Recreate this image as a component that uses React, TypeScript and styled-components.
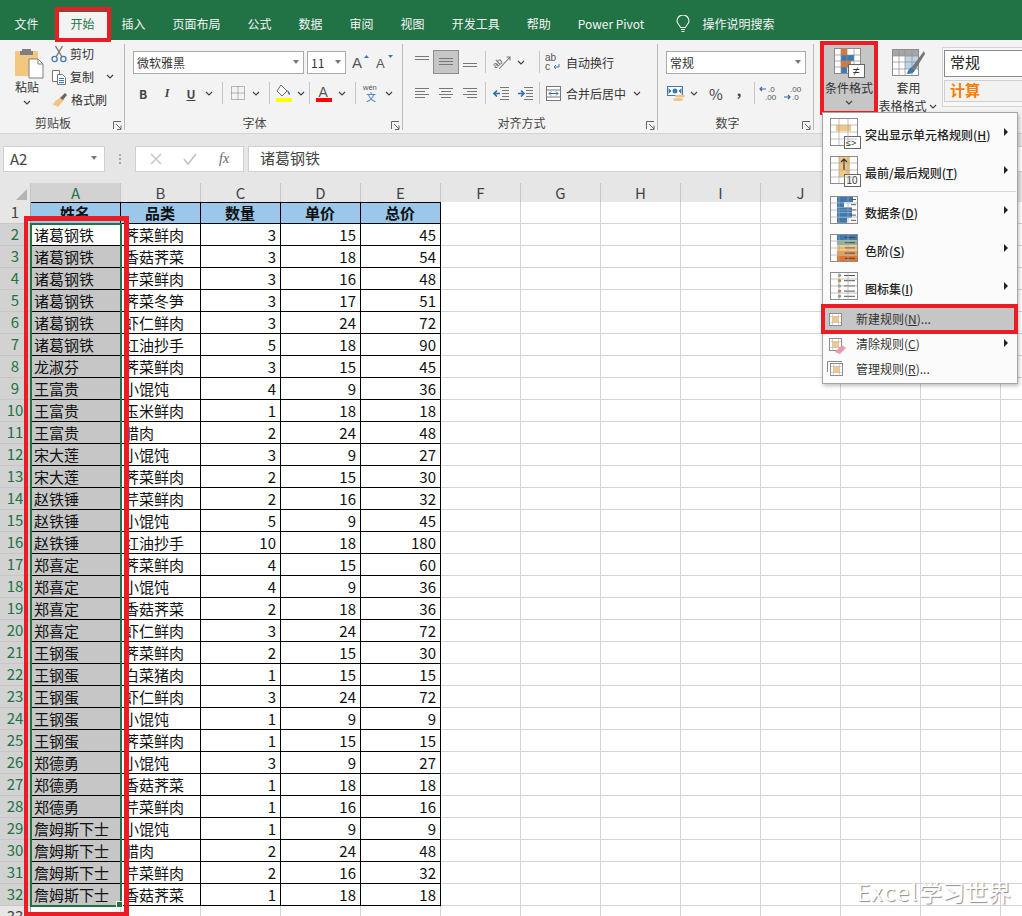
import React from 'react';
import styled, {createGlobalStyle} from 'styled-components';

const GlobalStyle = createGlobalStyle`
  html, body {
    margin: 0;
    height: 100%;
    overflow: hidden;
    background: #fff;
  }
  body {
    font-family: "Noto Sans CJK SC", "Liberation Sans", sans-serif;
    font-size: 12px;
    color: #333;
  }
`

const green = '#217346'
const red = '#ed1c24'

const Page = styled.div`
  position: relative;
  width: 1022px;
  height: 916px;
  overflow: hidden;
  display: flex;
  flex-direction: column;
`

const RedFrame = styled.div<{$inset: string}>`
  position: absolute;
  inset: ${p => p.$inset};
  border: 4px solid ${red};
  pointer-events: none;
  z-index: 5;
`

const ColumnFrame = styled(RedFrame)`
  width: 105px;
  box-sizing: border-box;
  border-width: 5px 5px 4px 4px;
`

/* ---------- title tabs ---------- */
const TabStrip = styled.div`
  height: 40px;
  flex: none;
  background: ${green};
  display: flex;
  align-items: flex-end;
  padding-left: 1px;
`

const Tab = styled.div<{$active?: boolean}>`
  position: relative;
  height: 28px;
  padding: 0 13.5px;
  line-height: 24px;
  color: ${p => p.$active ? green : '#f4f4f4'};
  background: ${p => p.$active ? '#f3f3f3' : 'transparent'};
  margin-left: ${p => p.$active ? '5px' : '0'};
  white-space: nowrap;
`

const SearchTab = styled(Tab)`
  display: flex;
  gap: 12px;
  margin-left: 5px;
  svg { margin-top: 3px; }
`

/* ---------- ribbon ---------- */
const Ribbon = styled.div`
  height: 94px;
  flex: none;
  display: flex;
  background: #f3f3f3;
  border-bottom: 1px solid #d4d4d4;
  box-sizing: border-box;
`

const Group = styled.div<{$w: number; $pad?: number}>`
  width: ${p => p.$w}px;
  flex: none;
  box-sizing: border-box;
  margin-top: 4px;
  height: 86px;
  border-right: 1px solid #b9b9b9;
  padding: 7px 0 0 ${p => p.$pad ?? 0}px;
  display: flex;
  flex-direction: column;
`

const GroupBody = styled.div`
  height: 63px;
  display: flex;
  flex: none;
`

const Stack = styled.div`
  display: flex;
  flex-direction: column;
  gap: 9px;
`

const Row = styled.div<{$off?: number}>`
  display: flex;
  align-items: center;
  height: 22px;
  margin-left: ${p => p.$off ?? 0}px;
`

const GroupLabel = styled.div<{$shift: number}>`
  display: flex;
  justify-content: center;
  height: 18px;
  line-height: 18px;
  color: #444;
  transform: translateX(${p => p.$shift}px);
`

const Launcher = styled.svg`
  position: absolute;
  right: 3px;
  bottom: 3px;
`

const GroupWrap = styled.div`
  position: relative;
`

const StylesWrap = styled(GroupWrap)`
  display: flex;
  flex: 1;
  padding: 5px 0 0 10px;
`

const Select = styled.div<{$w: number}>`
  width: ${p => p.$w}px;
  height: 23px;
  box-sizing: border-box;
  background: #fff;
  border: 1px solid #ababab;
  display: flex;
  align-items: center;
  justify-content: space-between;
  padding: 0 4px 0 3px;
  margin-right: 3px;
  color: #333;
`

const Caret = styled.i`
  width: 0;
  height: 0;
  border-left: 3.5px solid transparent;
  border-right: 3.5px solid transparent;
  border-top: 4px solid #777;
  flex: none;
`

const Btn = styled.div<{$w?: number; $on?: boolean; $h?: number}>`
  width: ${p => p.$w ?? 24}px;
  height: ${p => p.$h ?? 22}px;
  flex: none;
  display: flex;
  align-items: center;
  justify-content: center;
  color: #444;
  box-sizing: border-box;
  background: ${p => p.$on ? '#c6c6c6' : 'transparent'};
  outline: ${p => p.$on ? '1px solid #8c8c8c' : 'none'};
`

const Sep = styled.i<{$l?: number; $r?: number}>`
  width: 1px;
  height: 22px;
  background: #c6c6c6;
  margin: 0 ${p => p.$r ?? 3}px 0 ${p => p.$l ?? 7}px;
  flex: none;
`

const ClipColumn = styled.div`
  margin-top: -9px;
`

const ClipItem = styled.div<{$gap?: number}>`
  display: flex;
  align-items: center;
  height: 23px;
  gap: ${p => p.$gap ?? 3}px;
  color: #333;
  white-space: nowrap;
  svg { flex: none; }
`

const PasteBtn = styled.div`
  width: 40px;
  height: 70px;
  margin: -4px 4px 0 7px;
  display: flex;
  flex-direction: column;
  align-items: center;
  color: #333;
  line-height: 16px;
  svg { flex: none; }
  > svg { margin-left: 4px; }
`

const BigBtn = styled.div<{$w: number; $on?: boolean}>`
  position: relative;
  width: ${p => p.$w}px;
  height: 66px;
  background: ${p => p.$on ? '#c6c6c6' : 'transparent'};
  display: flex;
  flex-direction: column;
  align-items: center;
  line-height: 14px;
  white-space: nowrap;
  color: #333;
  flex: none;
  svg { flex: none; }
`

const BigLabel = styled.span<{$top?: number}>`
  display: flex;
  align-items: center;
  margin-top: ${p => p.$top ?? 0}px;
`

const StyleGallery = styled.div`
  margin: 2px 0 0 3px;
  flex: 1;
  height: 60px;
  box-sizing: border-box;
  background: #f7f7f7;
  border: 1px solid #d4d4d4;
  border-right: 0;
  padding: 2px 0 0 1px;
  display: flex;
  flex-direction: column;
  gap: 3px;
  font-size: 15px;
`

const StyleCell = styled.div<{$calc?: boolean}>`
  height: ${p => p.$calc ? 22 : 27}px;
  padding-left: 5px;
  box-sizing: border-box;
  background: ${p => p.$calc ? '#f2f2f2' : '#fff'};
  color: ${p => p.$calc ? '#fa7d00' : '#222'};
  font-weight: ${p => p.$calc ? 700 : 400};
  border: 1px solid ${p => p.$calc ? '#d0d0d0' : '#8a8a8a'};
  border-right: 0;
  line-height: ${p => p.$calc ? 18 : 21}px;
`

/* ---------- formula bar ---------- */
const FormulaBar = styled.div`
  height: 48px;
  flex: none;
  box-sizing: border-box;
  background: #e6e6e6;
  display: flex;
  padding: 12px 0 0 3px;
`

const NameBox = styled.div`
  width: 102px;
  height: 26px;
  box-sizing: border-box;
  background: #fff;
  border: 1px solid #d0d0d0;
  display: flex;
  align-items: center;
  justify-content: space-between;
  padding: 0 7px 2px 6px;
  font-size: 15px;
  color: #444;
`

const Dots = styled.div`
  width: 30px;
  height: 26px;
  display: flex;
  flex-direction: column;
  align-items: center;
  justify-content: center;
  gap: 2px;
  i { width: 2px; height: 2px; background: #a6a6a6; }
`

const FxButtons = styled.div`
  width: 109px;
  height: 26px;
  box-sizing: border-box;
  background: #fff;
  border: 1px solid #d0d0d0;
  display: flex;
  align-items: center;
  justify-content: space-around;
  padding: 0 3px;
  margin-right: 4px;
  color: #777;
`

const FxMark = styled.span`
  font: italic 14px "Liberation Serif", serif;
  color: #666;
`

const FormulaInput = styled.div`
  flex: 1;
  height: 26px;
  box-sizing: border-box;
  background: #fff;
  border: 1px solid #d0d0d0;
  border-right: 0;
  padding-left: 11px;
  font-size: 15px;
  line-height: 22px;
  color: #444;
`

/* ---------- sheet ---------- */
const Sheet = styled.div`
  position: relative;
  flex: 1;
  overflow: hidden;
  padding-top: 1px;
  background-color: #e6e6e6;
`

const GridRow = styled.div<{$head?: boolean}>`
  display: grid;
  grid-template-columns: 31px 90px repeat(12, 80px);
  height: ${p => p.$head ? 19 : 22}px;
  background: #fff;
  font-size: 15px;
  line-height: 20px;
`

const ColHead = styled.div<{$selected?: boolean}>`
  background: ${p => p.$selected ? '#d2d2d2' : '#e6e6e6'};
  color: ${p => p.$selected ? green : '#444'};
  border-right: 1px solid #c6c6c6;
  border-bottom: ${p => p.$selected ? `2px solid ${green}` : '1px solid #a6a6a6'};
  box-sizing: border-box;
  text-align: center;
  line-height: 19px;
`

const Corner = styled(ColHead)`
  display: flex;
  align-items: flex-end;
  justify-content: flex-end;
  padding: 0 3px 3px 0;
  svg { display: block; }
`

const RowHead = styled.div<{$selected?: boolean}>`
  background: ${p => p.$selected ? '#d2d2d2' : '#e6e6e6'};
  color: ${p => p.$selected ? green : '#444'};
  border-right: 1px solid #a6a6a6;
  border-bottom: 1px solid #c6c6c6;
  box-sizing: border-box;
  text-align: center;
`

const Cell = styled.div<{$selected?: boolean; $lined?: boolean; $title?: boolean; $num?: boolean}>`
  box-sizing: border-box;
  border-right: 1px solid ${p => p.$lined ? '#000' : '#d4d4d4'};
  border-bottom: 1px solid ${p => p.$lined ? '#000' : '#d4d4d4'};
  background: ${p => p.$title ? '#9bc8ea' : p.$selected ? '#c6c6c6' : '#fff'};
  box-shadow: ${p => p.$title ? 'inset 0 1px 0 #000' : 'none'};
  font-weight: ${p => p.$title ? 700 : 400};
  text-align: ${p => p.$title ? 'center' : p.$num ? 'right' : 'left'};
  padding: 0 4px 0 ${p => p.$num ? 0 : 3}px;
  color: #111;
  white-space: nowrap;
  overflow: hidden;
  line-height: 21px;
`

const Selection = styled.div`
  position: absolute;
  left: 30px;
  top: 41px;
  width: 92px;
  height: 684px;
  box-sizing: border-box;
  border: 2px solid ${green};
  z-index: 3;
  pointer-events: none;
`

const Handle = styled.i`
  position: absolute;
  right: -3px;
  bottom: -3px;
  width: 5px;
  height: 5px;
  background: ${green};
  border: 1px solid #fff;
`

const Watermark = styled.div`
  position: absolute;
  right: 11px;
  bottom: 12px;
  font-size: 23px;
  line-height: 26px;
  color: #fff;
  text-shadow: 1px 1px 1px #8c8c8c;
  z-index: 4;
`

const WatermarkLatin = styled.span`
  letter-spacing: 1.6px;
`

/* ---------- dropdown ---------- */
const Menu = styled.div`
  position: absolute;
  left: 822px;
  top: 112px;
  width: 196px;
  height: 272px;
  box-sizing: border-box;
  background: #fbfbfb;
  border: 1px solid #a6a6a6;
  box-shadow: 1px 2px 4px rgba(0, 0, 0, .25);
  padding-top: 2px;
  z-index: 6;
`

const BigItem = styled.div`
  height: 38px;
  display: grid;
  grid-template-columns: 42px 1fr 13px;
  align-items: center;
  font-weight: 500;
  color: #222;
  svg { margin-left: 7px; }
`

const SmallItem = styled.div<{$hot?: boolean}>`
  position: relative;
  height: 25px;
  display: grid;
  grid-template-columns: 33px 1fr 13px;
  align-items: center;
  color: #333;
  background: ${p => p.$hot ? '#c6c6c6' : 'transparent'};
  span { padding-bottom: 2px; }
  svg { margin-left: 4px; }
`

const MenuSep = styled.div`
  height: 1px;
  margin: 0 1px 1px 45px;
  background: #d8d8d8;
`

const SubArrow = styled.i`
  width: 0;
  height: 0;
  border-top: 4px solid transparent;
  border-bottom: 4px solid transparent;
  border-left: 4px solid #222;
  margin-bottom: 4px;
`

/* ---------- icons ---------- */
const Chev = ({w = 12, h}: {w?: number; h?: number}) => (
  <Btn $w={w} $h={h}><svg width="8" height="5" viewBox="0 0 8 5"><path d="M1 1l3 3 3-3" fill="none" stroke="#444" strokeWidth="1.2"/></svg></Btn>
)

const LauncherIcon = () => (
  <Launcher width="9" height="9" viewBox="0 0 9 9">
    <path d="M.5 8V.5H8M3 3l5 5M8 4.5V8.500H4" fill="none" stroke="#666"/>
  </Launcher>
)

const Paste = () => (
  <svg width="30" height="32" viewBox="0 0 30 32">
    <rect x="1" y="4" width="23" height="25" rx="1" fill="#f3c77f"/>
    <path d="M8 4V2h9v2h2v4H6V4z" fill="#7f7f7f"/>
    <path d="M15 12h9l5 5v14H15z" fill="#fff" stroke="#7f7f7f"/>
    <path d="M24 12v5h5" fill="none" stroke="#7f7f7f"/>
  </svg>
)

const Scissors = () => (
  <svg width="16" height="18" viewBox="0 0 16 18">
    <circle cx="3.6" cy="14" r="2.6" fill="none" stroke="#3d78b3" strokeWidth="1.3"/>
    <circle cx="12.4" cy="14" r="2.6" fill="none" stroke="#3d78b3" strokeWidth="1.3"/>
    <path d="M4.5 1l6.5 11M11.5 1L5 12" stroke="#777" strokeWidth="1.4"/>
  </svg>
)

const CopyIcon = () => (
  <svg width="16" height="16" viewBox="0 0 16 16">
    <path d="M1.5 1.500h7v11h-7z" fill="#fff" stroke="#777"/>
    <path d="M6.500 5.500h5l3 3v7h-8z" fill="#fff" stroke="#777"/>
    <path d="M8 9.500h5M8 11.500h5M8 13.500h5" stroke="#3d78b3"/>
  </svg>
)

const Painter = () => (
  <svg width="17" height="16" viewBox="0 0 17 16">
    <path d="M10 5l3 3-6 7-6-3 3-1-1-1z" fill="#f0c583"/>
    <path d="M9 6l5-5 2 2-4 5z" fill="#666"/>
  </svg>
)

const GrowFont = ({up}: {up: boolean}) => (
  <svg width="20" height="16" viewBox="0 0 20 16">
    <text x="1" y="14" fontSize={up ? 15 : 13} fontFamily="Liberation Sans" fill="#555">A</text>
    <path d={up ? 'M13 4l2.500-3L18 4z' : 'M13 1h5l-2.500 3z'} fill="#3d78b3"/>
  </svg>
)

const BorderIcon = () => (
  <svg width="14" height="14" viewBox="0 0 14 14">
    <path d="M.5.500h13v13H.5zM7 .5v13M.5 7h13" fill="none" stroke="#777" strokeDasharray="1 1"/>
  </svg>
)

const FillIcon = () => (
  <svg width="18" height="18" viewBox="0 0 18 18">
    <path d="M6 1l6 6-5 5-5-5z" fill="#fff" stroke="#666"/>
    <path d="M12 6c2 1 3 3 3 4s-2 1-2-1z" fill="#3d78b3"/>
    <rect x="1" y="14" width="16" height="4" fill="#ffff00"/>
  </svg>
)

const ColorIcon = () => (
  <svg width="18" height="18" viewBox="0 0 18 18">
    <text x="3.500" y="13" fontSize="14" fontFamily="Liberation Sans" fill="#555">A</text>
    <rect x="1" y="14" width="16" height="4" fill="#ff0000"/>
  </svg>
)

const WenIcon = () => (
  <svg width="18" height="20" viewBox="0 0 18 20">
    <text x="1" y="7" fontSize="7.500" fontFamily="Liberation Sans" fill="#555">wén</text>
    <text x="4" y="18" fontSize="10" fontFamily="Noto Sans CJK SC" fill="#3d78b3">文</text>
  </svg>
)

const Lines = ({rows, y = 1}: {rows: number; y?: number}) => (
  <svg width="16" height="16" viewBox="0 0 16 16">
    {Array.from({length: rows}).map((_, i) =>
      <path key={i} d={`M1 ${y + i * 3 + .5}h14`} stroke="#777"/>)}
  </svg>
)

const AlignText = ({side}: {side: 'l' | 'c' | 'r'}) => {
  const short = side === 'l' ? 'M1 5.500h10M1 11.500h10' : side === 'c' ? 'M3 5.500h10M3 11.500h10' : 'M5 5.500h10M5 11.500h10'
  return (
    <svg width="16" height="14" viewBox="0 0 16 14">
      <path d="M1 2.500h14M1 8.500h14" stroke="#777"/>
      <path d={short} stroke="#777"/>
    </svg>
  )
}

const Orient = () => (
  <svg width="18" height="16" viewBox="0 0 18 16">
    <text x="0" y="12" fontSize="9" fontFamily="Liberation Sans" fill="#555" transform="rotate(-40 5 10)">ab</text>
    <path d="M6 15L17 3M13.500 3H17v3.500" fill="none" stroke="#777" strokeWidth="1.100"/>
  </svg>
)

const Indent = ({dir}: {dir: 'in' | 'out'}) => (
  <svg width="17" height="14" viewBox="0 0 17 14">
    <path d="M7 1.500h9M9 4.500h7M9 7.500h7M9 10.500h7M7 13.500h9" stroke="#777"/>
    <path d={dir === 'out' ? 'M7 7.500H1M4 4.500l-3 3 3 3' : 'M1 7.500h6M4 4.500l3 3-3 3'} fill="none" stroke="#2f6ea8" strokeWidth="1.600"/>
  </svg>
)

const WrapIcon = () => (
  <svg width="16" height="18" viewBox="0 0 16 18">
    <text x="0" y="8" fontSize="10" fontFamily="Liberation Sans" fill="#555">ab</text>
    <text x="0" y="17" fontSize="10" fontFamily="Liberation Sans" fill="#555">c</text>
    <path d="M14 11v3H9M11 12l-2 2 2 2" fill="none" stroke="#3d78b3"/>
  </svg>
)

const MergeIcon = () => (
  <svg width="15" height="15" viewBox="0 0 15 15">
    <rect x=".5" y=".5" width="14" height="14" fill="#fff" stroke="#777"/>
    <path d="M.5 4h14M.5 11h14" fill="none" stroke="#777"/>
    <path d="M3 7.500h9M3 7.500l2-2M3 7.500l2 2M12 7.500l-2-2M12 7.500l-2 2" fill="none" stroke="#2f6ea8"/>
  </svg>
)

const MoneyIcon = () => (
  <svg width="20" height="17" viewBox="0 0 20 17">
    <rect x=".5" y="1.500" width="15" height="9" fill="#fff" stroke="#3d78b3"/>
    <circle cx="8" cy="6" r="2.500" fill="#3d78b3"/>
    <path d="M1.500 3l3 3-3 3zM14.500 3l-3 3 3 3z" fill="#3d78b3"/>
    <ellipse cx="13" cy="11" rx="5" ry="1.500" fill="#f0c583"/>
    <ellipse cx="11" cy="14.500" rx="5" ry="1.500" fill="#f0c583"/>
  </svg>
)

const DecimalIcon = ({more}: {more: boolean}) => (
  <svg width="22" height="18" viewBox="0 0 22 18">
    <text x={more ? 9 : 7} y="8" fontSize="8" fontFamily="Liberation Sans" fill="#555">{more ? '.0' : '.00'}</text>
    <text x={more ? 6 : 9} y="16" fontSize="8" fontFamily="Liberation Sans" fill="#555">{more ? '.00' : '.0'}</text>
    <path d={more ? 'M7 5H1M3 3L1 5l2 2' : 'M1 13h6M5 11l2 2-2 2'} fill="none" stroke="#2f6ea8" strokeWidth="1.200"/>
  </svg>
)

const Bulb = () => (
  <svg width="14" height="18" viewBox="0 0 14 18">
    <path d="M4.500 12.500C4 10 1 9 1 6a6 6 0 0 1 12 0c0 3-3 4-3.500 6.500zM5 14.500h4M5.500 16.500h3" fill="none" stroke="#f4f4f4" strokeWidth="1.100"/>
  </svg>
)

const CondIcon = () => (
  <svg width="31" height="30" viewBox="0 0 31 30" style={{marginTop: 3}}>
    <rect x=".5" y=".5" width="26" height="25" fill="#fff" stroke="#8c8c8c"/>
    <rect x="7" y="1" width="6" height="6" fill="#e2762e"/>
    <rect x="7" y="7" width="13" height="6" fill="#3d78b3"/>
    <rect x="7" y="13" width="10" height="6" fill="#e2762e"/>
    <rect x="7" y="19" width="6" height="6" fill="#3d78b3"/>
    <path d="M7 1v24M13 1v24M20 1v24M1 7h25M1 13h25M1 19h25" stroke="#8c8c8c" strokeWidth=".7"/>
    <rect x="14.500" y="16.500" width="16" height="13" fill="#fff" stroke="#666"/>
    <text x="19" y="27" fontSize="12" fontFamily="Liberation Sans" fill="#333">≠</text>
  </svg>
)

const TableStyleIcon = () => (
  <svg width="34" height="30" viewBox="0 0 34 30" style={{marginTop: 4}}>
    <rect x=".5" y=".5" width="26" height="26" fill="#fff" stroke="#8c8c8c"/>
    <rect x="1" y="1" width="25" height="6" fill="#a6a6a6"/>
    <rect x="13" y="7" width="13" height="13" fill="#bcd3ea"/>
    <path d="M7 1v26M13 1v26M20 1v26M1 7h25M1 13h25M1 20h25" stroke="#8c8c8c" strokeWidth=".7"/>
    <path d="M32 2L20 18l3 3L33 5z" fill="#777"/>
    <path d="M20 18c-3 1-4 3-5 7 4 0 7-1 8-4z" fill="#3d78b3"/>
  </svg>
)

const MenuGrid = ({children}: {children: React.ReactNode}) => (
  <svg width="32" height="32" viewBox="0 0 32 32">
    <rect x=".5" y=".5" width="27" height="27" fill="#fff" stroke="#8c8c8c"/>
    {children}
    <path d="M9 1v26M18 1v26M1 7h26M1 14h26M1 21h26" stroke="#a6a6a6" strokeWidth=".7"/>
  </svg>
)

const Badge = ({text}: {text: string}) => (
  <>
    <rect x="14.500" y="18.500" width="16" height="12" fill="#fff" stroke="#666"/>
    <text x={text === '10' ? 16.5 : 16} y="28" fontSize={text === '10' ? 10 : 9} fontFamily="Liberation Sans" fill="#333">{text}</text>
  </>
)

const HighlightIcon = () => (
  <MenuGrid>
    <rect x="6" y="7" width="15" height="6" fill="#f3c77f"/>
    <Badge text="≤>"/>
  </MenuGrid>
)

const TopIcon = () => (
  <MenuGrid>
    <rect x="9" y="1" width="11" height="20" fill="#f3c77f"/>
    <path d="M14 14V3M11 6l3-3 3 3" fill="none" stroke="#333" strokeWidth="1.200"/>
    <Badge text="10"/>
  </MenuGrid>
)

const BarsIcon = () => (
  <MenuGrid>
    {[16, 7, 15, 15, 10].map((w, i) =>
      <React.Fragment key={i}>
        <rect x="7" y={1 + i * 5.2} width={w} height="5" fill="#3d78b3"/>
        <path d={`M21 ${3.5 + i * 5.2}h5`} stroke="#555"/>
      </React.Fragment>)}
  </MenuGrid>
)

const ScaleIcon = () => (
  <MenuGrid>
    {['#3d78b3', '#8fb39a', '#f3c77f', '#eb9c50', '#e2762e'].map((c, i) =>
      <React.Fragment key={c}>
        <rect x="7" y={1 + i * 5.2} width="20" height="5.2" fill={c}/>
        <path d={`M15 ${3.5 + i * 5.2}h10`} stroke="#444"/>
      </React.Fragment>)}
  </MenuGrid>
)

const IconSetIcon = () => (
  <MenuGrid>
    {['#7fb08c', '#e2762e', '#7fb08c', '#e2762e', '#7fb08c'].map((c, i) =>
      <React.Fragment key={i}>
        <circle cx="9.500" cy={3.5 + i * 5.2} r="1.700" fill={c}/>
        <path d={`M14 ${3.5 + i * 5.2}h11`} stroke="#555"/>
      </React.Fragment>)}
  </MenuGrid>
)

const SmallRule = ({kind}: {kind: 'new' | 'clear' | 'manage'}) => {
  const x = kind === 'manage' ? 3.5 : 2.5
  return (
    <svg width="20" height="20" viewBox="0 0 20 20">
      {kind === 'manage' && <path d="M.5 12V1.500H15" fill="none" stroke="#8c8c8c"/>}
      <rect x={x} y="3.500" width="12" height="12" fill="#fff" stroke="#8c8c8c"/>
      <rect x={x + 3} y="6.500" width="6" height="6" fill="#f3c77f"/>
      <path d={`M${x} 6.500h12M${x} 12.500h12M${x + 3} 3.500v12M${x + 9} 3.500v12`} stroke="#b5b5b5" strokeWidth=".6"/>
      {kind === 'clear' && <path d="M8 17l7-7 4 3-6 6z" fill="#e89ab0"/>}
    </svg>
  )
}

/* ---------- data ---------- */
type Rec = [string, string, number, number, number]

const records: Rec[] = [
  ['诸葛钢铁', '荠菜鲜肉', 3, 15, 45], ['诸葛钢铁', '香菇荠菜', 3, 18, 54],
  ['诸葛钢铁', '芹菜鲜肉', 3, 16, 48], ['诸葛钢铁', '荠菜冬笋', 3, 17, 51],
  ['诸葛钢铁', '虾仁鲜肉', 3, 24, 72], ['诸葛钢铁', '红油抄手', 5, 18, 90],
  ['龙淑芬', '荠菜鲜肉', 3, 15, 45], ['王富贵', '小馄饨', 4, 9, 36],
  ['王富贵', '玉米鲜肉', 1, 18, 18], ['王富贵', '腊肉', 2, 24, 48],
  ['宋大莲', '小馄饨', 3, 9, 27], ['宋大莲', '荠菜鲜肉', 2, 15, 30],
  ['赵铁锤', '芹菜鲜肉', 2, 16, 32], ['赵铁锤', '小馄饨', 5, 9, 45],
  ['赵铁锤', '红油抄手', 10, 18, 180], ['郑喜定', '荠菜鲜肉', 4, 15, 60],
  ['郑喜定', '小馄饨', 4, 9, 36], ['郑喜定', '香菇荠菜', 2, 18, 36],
  ['郑喜定', '虾仁鲜肉', 3, 24, 72], ['王钢蛋', '荠菜鲜肉', 2, 15, 30],
  ['王钢蛋', '白菜猪肉', 1, 15, 15], ['王钢蛋', '虾仁鲜肉', 3, 24, 72],
  ['王钢蛋', '小馄饨', 1, 9, 9], ['王钢蛋', '荠菜鲜肉', 1, 15, 15],
  ['郑德勇', '小馄饨', 3, 9, 27], ['郑德勇', '香菇荠菜', 1, 18, 18],
  ['郑德勇', '芹菜鲜肉', 1, 16, 16], ['詹姆斯下士', '小馄饨', 1, 9, 9],
  ['詹姆斯下士', '腊肉', 2, 24, 48], ['詹姆斯下士', '芹菜鲜肉', 2, 16, 32],
  ['詹姆斯下士', '香菇荠菜', 1, 18, 18],
]

const letters = 'ABCDEFGHIJKLM'.split('')
const blanks = (n: number) => Array.from({length: n}).map((_, i) => <Cell key={i}/>)

function TitleTabs() {
  return (
    <TabStrip>
      <Tab>文件</Tab>
      <Tab $active>开始<RedFrame $inset="-5px -3px -2px -2px"/></Tab>
      {['插入', '页面布局', '公式', '数据', '审阅', '视图', '开发工具', '帮助', 'Power Pivot'].map(t => <Tab key={t}>{t}</Tab>)}
      <SearchTab><Bulb/>操作说明搜索</SearchTab>
    </TabStrip>
  )
}

function HomeRibbon() {
  return (
    <Ribbon>
      <GroupWrap>
        <Group $w={125}>
          <GroupBody>
            <PasteBtn>
              <Paste/>
              <span>粘贴</span>
              <Chev h={14}/>
            </PasteBtn>
            <ClipColumn>
              <ClipItem><Scissors/>剪切</ClipItem>
              <ClipItem><CopyIcon/>复制<span style={{width: 4}}/><Chev/></ClipItem>
              <ClipItem><Painter/>格式刷</ClipItem>
            </ClipColumn>
          </GroupBody>
          <GroupLabel $shift={-9}>剪贴板</GroupLabel>
        </Group>
        <LauncherIcon/>
      </GroupWrap>

      <GroupWrap>
        <Group $w={278} $pad={8}>
          <GroupBody>
            <Stack>
              <Row>
                <Select $w={171}>微软雅黑<Caret/></Select>
                <Select $w={39}>11<Caret/></Select>
                <Btn><GrowFont up/></Btn>
                <Btn><GrowFont up={false}/></Btn>
              </Row>
              <Row $off={-2}>
                <Btn><b>B</b></Btn>
                <Btn><i style={{fontFamily: 'Liberation Serif', fontWeight: 700}}>I</i></Btn>
                <Btn><b style={{textDecoration: 'underline'}}>U</b></Btn>
                <Chev/>
                <Sep/>
                <Btn><BorderIcon/></Btn>
                <Chev/>
                <Sep/>
                <Btn $w={22}><FillIcon/></Btn>
                <Chev/>
                <Sep $l={2} $r={2}/>
                <Btn $w={24}><ColorIcon/></Btn>
                <Chev/>
                <Sep/>
                <Btn><WenIcon/></Btn>
                <Chev/>
              </Row>
            </Stack>
          </GroupBody>
          <GroupLabel $shift={-13}>字体</GroupLabel>
        </Group>
        <LauncherIcon/>
      </GroupWrap>

      <GroupWrap>
        <Group $w={255} $pad={7}>
          <GroupBody>
            <Stack>
              <Row>
                <Btn><Lines rows={2} y={2}/></Btn>
                <Btn $on><Lines rows={3} y={4}/></Btn>
                <Btn><Lines rows={2} y={9}/></Btn>
                <Sep $l={3}/>
                <Btn $w={26}><Orient/></Btn>
                <Chev/>
                <Sep $l={12} $r={5}/>
                <ClipItem $gap={5}><WrapIcon/>自动换行</ClipItem>
              </Row>
              <Row>
                <Btn><AlignText side="l"/></Btn>
                <Btn><AlignText side="c"/></Btn>
                <Btn><AlignText side="r"/></Btn>
                <Sep $l={3}/>
                <Btn><Indent dir="out"/></Btn>
                <Btn><Indent dir="in"/></Btn>
                <Sep $l={2} $r={6}/>
                <ClipItem $gap={5}><MergeIcon/>合并后居中<Chev/></ClipItem>
              </Row>
            </Stack>
          </GroupBody>
          <GroupLabel $shift={-12}>对齐方式</GroupLabel>
        </Group>
        <LauncherIcon/>
      </GroupWrap>

      <GroupWrap>
        <Group $w={156} $pad={8}>
          <GroupBody>
            <Stack>
              <Row><Select $w={140} style={{margin: 0}}>常规<Caret/></Select></Row>
              <Row>
                <Btn $w={22}><MoneyIcon/></Btn>
                <Chev/>
                <Btn $w={24} style={{marginLeft: 4, fontSize: 15}}>%</Btn>
                <Btn $w={22} style={{fontSize: 14, fontWeight: 700, paddingBottom: 6}}>,</Btn>
                <Sep $l={4}/>
                <Btn><DecimalIcon more/></Btn>
                <Btn><DecimalIcon more={false}/></Btn>
              </Row>
            </Stack>
          </GroupBody>
          <GroupLabel $shift={-12}>数字</GroupLabel>
        </Group>
        <LauncherIcon/>
      </GroupWrap>

      <StylesWrap>
        <BigBtn $w={50} $on>
          <CondIcon/>
          <BigLabel $top={3}>条件格式</BigLabel>
          <Chev h={14}/>
          <RedFrame $inset="-4px"/>
        </BigBtn>
        <BigBtn $w={61} style={{marginLeft: 4}}>
          <TableStyleIcon/>
          <BigLabel $top={2}>套用</BigLabel>
          <BigLabel>表格格式<Chev/></BigLabel>
        </BigBtn>
        <StyleGallery>
          <StyleCell>常规</StyleCell>
          <StyleCell $calc>计算</StyleCell>
        </StyleGallery>
      </StylesWrap>
    </Ribbon>
  )
}

function Formula() {
  return (
    <FormulaBar>
      <NameBox>A2<Caret/></NameBox>
      <Dots><i/><i/><i/></Dots>
      <FxButtons>
        <svg width="12" height="12" viewBox="0 0 12 12"><path d="M1 1l10 10M11 1L1 11" stroke="#c6c6c6" strokeWidth="1.500"/></svg>
        <svg width="14" height="12" viewBox="0 0 14 12"><path d="M1 6l4 5 8-10" fill="none" stroke="#c6c6c6" strokeWidth="1.800"/></svg>
        <FxMark>fx</FxMark>
      </FxButtons>
      <FormulaInput>诸葛钢铁</FormulaInput>
    </FormulaBar>
  )
}

function Grid() {
  return (
    <Sheet>
      <GridRow $head>
        <Corner><svg width="11" height="11" viewBox="0 0 11 11"><path d="M11 0v11H0z" fill="#b5b5b5"/></svg></Corner>
        {letters.map((l, i) => <ColHead key={l} $selected={i === 0}>{l}</ColHead>)}
      </GridRow>
      <GridRow>
        <RowHead>1</RowHead>
        {['姓名', '品类', '数量', '单价', '总价'].map(t => <Cell key={t} $title $lined>{t}</Cell>)}
        {blanks(8)}
      </GridRow>
      {records.map((r, i) =>
        <GridRow key={i}>
          <RowHead $selected>{i + 2}</RowHead>
          <Cell $lined $selected={i > 0}>{r[0]}</Cell>
          <Cell $lined>{r[1]}</Cell>
          <Cell $lined $num>{r[2]}</Cell>
          <Cell $lined $num>{r[3]}</Cell>
          <Cell $lined $num>{r[4]}</Cell>
          {blanks(8)}
        </GridRow>)}
      <GridRow>
        <RowHead>33</RowHead>
        {blanks(13)}
      </GridRow>
      <Selection><Handle/></Selection>
      <ColumnFrame $inset="34px auto 0 24px"/>
      <Watermark><WatermarkLatin>Excel</WatermarkLatin>学习世界</Watermark>
    </Sheet>
  )
}

const u = (k: string) => <>(<u>{k}</u>)</>

function RulesMenu() {
  return (
    <Menu>
      <BigItem><HighlightIcon/><span>突出显示单元格规则{u('H')}</span><SubArrow/></BigItem>
      <BigItem><TopIcon/><span>最前/最后规则{u('T')}</span><SubArrow/></BigItem>
      <MenuSep/>
      <BigItem><BarsIcon/><span>数据条{u('D')}</span><SubArrow/></BigItem>
      <BigItem><ScaleIcon/><span>色阶{u('S')}</span><SubArrow/></BigItem>
      <BigItem><IconSetIcon/><span>图标集{u('I')}</span><SubArrow/></BigItem>
      <SmallItem $hot>
        <SmallRule kind="new"/><span>新建规则{u('N')}...</span><span/>
        <RedFrame $inset="-3px -1px -2px -2px"/>
      </SmallItem>
      <SmallItem><SmallRule kind="clear"/><span>清除规则{u('C')}</span><SubArrow/></SmallItem>
      <SmallItem><SmallRule kind="manage"/><span>管理规则{u('R')}...</span><span/></SmallItem>
    </Menu>
  )
}

function App() {
  return (
    <Page>
      <GlobalStyle/>
      <TitleTabs/>
      <HomeRibbon/>
      <Formula/>
      <Grid/>
      <RulesMenu/>
    </Page>
  )
}

export default App;
